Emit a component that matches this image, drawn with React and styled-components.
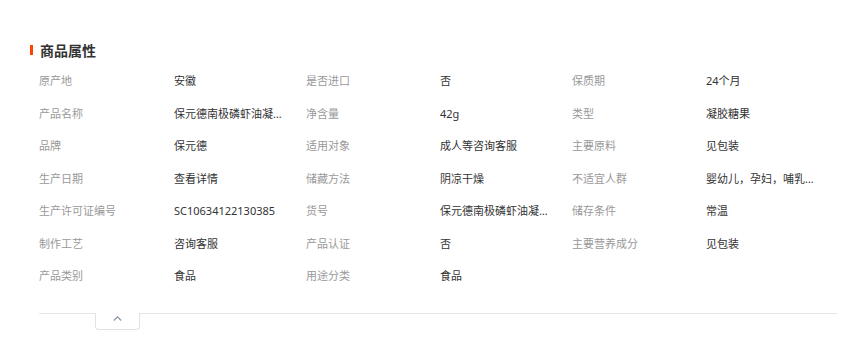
import React from "react";
import styled, { createGlobalStyle } from "styled-components";

const GlobalStyle = createGlobalStyle`
  body {
    margin: 0;
    background: #fff;
    font-family: "Noto Sans CJK SC", "Noto Sans", sans-serif;
  }
`;

const Section = styled.section`
  width: 843px;
  height: 343px;
  padding-top: 40px;
  box-sizing: border-box;
`;

const TitleRow = styled.div`
  display: flex;
  align-items: center;
  padding-left: 30px;
  height: 20px;
`;

const TitleBar = styled.span`
  width: 3px;
  height: 10px;
  background: #ff4200;
  margin-right: 7px;
`;

const Title = styled.h3`
  margin: 0;
  font-size: 14px;
  line-height: 20px;
  font-weight: 700;
  color: #333;
`;

const Grid = styled.div`
  display: grid;
  grid-template-columns: 135px 132px 134px 132px 134px 1fr;
  grid-auto-rows: 32.5px;
  align-items: center;
  margin-top: 5px;
  padding-left: 39px;
`;

const Cell = styled.div`
  font-family: "Noto Sans", "Noto Sans CJK SC", sans-serif;
  font-size: 11px;
  line-height: 16px;
  color: ${(p) => (p.$label ? "#999" : "#333")};
  max-width: 110px;
  white-space: nowrap;
  overflow: hidden;
  text-overflow: ellipsis;
`;

const Footer = styled.div`
  margin: 20px 6px 0 39px;
  border-top: 1px solid #e6e6e6;
`;

const ToggleTab = styled.button`
  display: flex;
  align-items: flex-start;
  justify-content: center;
  width: 45px;
  height: 17px;
  margin: -1px 0 0 56px;
  padding: 3px 0 0;
  background: #fff;
  border: 1px solid #e2e2e2;
  border-top: none;
  border-radius: 0 0 4px 4px;
  cursor: pointer;
`;

const attrs = [
  ["原产地", "安徽", "是否进口", "否", "保质期", "24个月"],
  ["产品名称", "保元德南极磷虾油凝胶糖果", "净含量", "42g", "类型", "凝胶糖果"],
  ["品牌", "保元德", "适用对象", "成人等咨询客服", "主要原料", "见包装"],
  ["生产日期", "查看详情", "储藏方法", "阴凉干燥", "不适宜人群", "婴幼儿，孕妇，哺乳期妇女"],
  ["生产许可证编号", "SC10634122130385", "货号", "保元德南极磷虾油凝胶糖果", "储存条件", "常温"],
  ["制作工艺", "咨询客服", "产品认证", "否", "主要营养成分", "见包装"],
  ["产品类别", "食品", "用途分类", "食品"],
];

const App = () => {
  return (
    <>
      <GlobalStyle />
      <Section>
        <TitleRow>
          <TitleBar />
          <Title>商品属性</Title>
        </TitleRow>
        <Grid>
          {attrs.map((row, i) =>
            row.map((text, j) => (
              <Cell key={`${i}-${j}`} $label={j % 2 === 0}>
                {text}
              </Cell>
            ))
          )}
        </Grid>
        <Footer>
          <ToggleTab aria-label="收起">
            <svg width="9" height="5" viewBox="0 0 9 5">
              <polyline
                points="0.8,4.5 4.5,0.8 8.2,4.5"
                fill="none"
                stroke="#8d97a8"
                strokeWidth="1.2"
              />
            </svg>
          </ToggleTab>
        </Footer>
      </Section>
    </>
  );
};

export default App;
